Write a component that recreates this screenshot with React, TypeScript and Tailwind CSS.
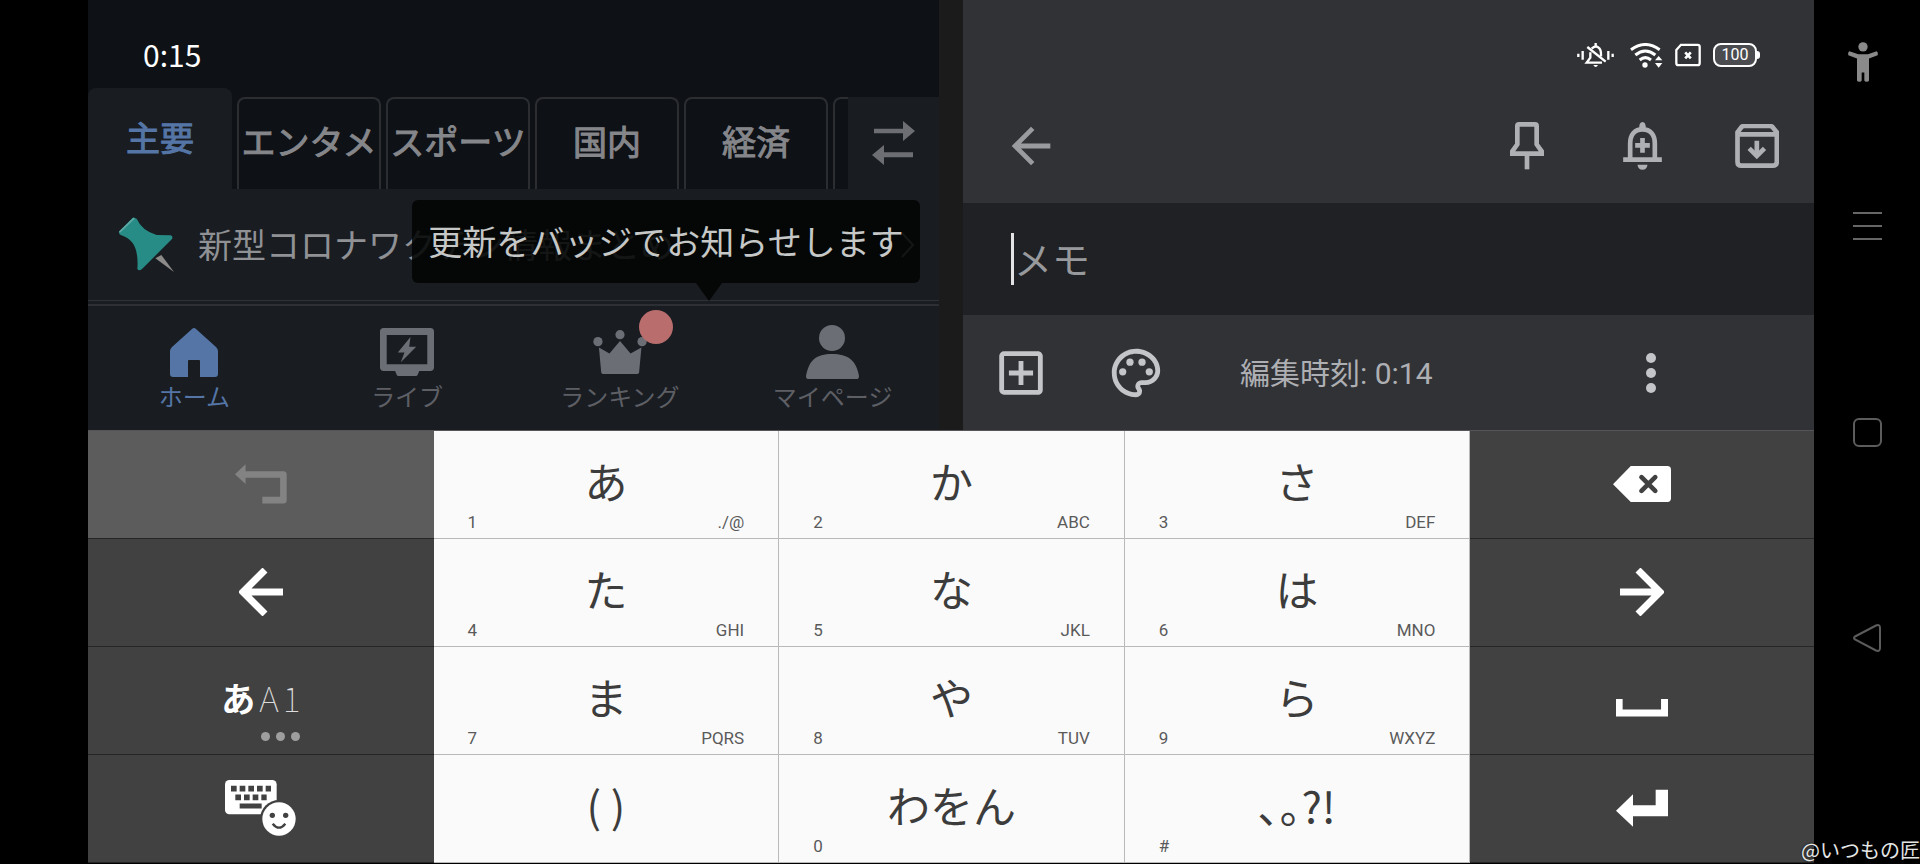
import type { ReactNode } from "react";
import { MdArrowBack, MdOutlineAddBox, MdOutlinePalette } from "react-icons/md";

const TABS = ["主要", "エンタメ", "スポーツ", "国内", "経済", ""];

const HomeIcon = () => (
  <svg width="48" height="49" viewBox="0 0 48 49" fill="currentColor">
    <path d="M22 1Q24 -1 26 1L46 19Q48 21 48 23V46Q48 49 45 49H30V33Q30 32 29 32H19Q18 32 18 33V49H3Q0 49 0 46V23Q0 21 2 19Z" />
  </svg>
);

const LiveIcon = () => (
  <svg width="54" height="48" viewBox="31 70 161 143" fill="currentColor">
    <path
      fillRule="evenodd"
      d="M42 70H181Q192 70 192 81V187Q192 198 181 198H148L143 210Q142 213 138 213H86Q82 213 81 210L76 198H42Q31 198 31 187V81Q31 70 42 70ZM51 91V178H172V91ZM122 97L118 126H139L93 172L104 143H84Z"
    />
  </svg>
);

const CrownIcon = () => (
  <svg width="54" height="44" viewBox="668 72 164 133" fill="currentColor">
    <circle cx="683" cy="107" r="14" />
    <circle cx="750" cy="86" r="14" />
    <circle cx="817" cy="107" r="14" />
    <path d="M686 125L718 143L750 105L782 143L815 125L808 201Q807 205 803 205H698Q694 205 693 201Z" />
  </svg>
);

const UserIcon = () => (
  <svg width="53" height="54" viewBox="0 0 53 54" fill="currentColor">
    <circle cx="26" cy="13" r="13" />
    <path d="M26 29C42 29 50 35 53 51Q53 54 51 54H2Q0 54 0 51C3 35 10 29 26 29Z" />
  </svg>
);

const NewsPinIcon = () => (
  <svg width="55" height="55" viewBox="117 650 165 165">
    <path d="M226 774L244 764L282 815Z" fill="#8d8a8a" />
    <path
      d="M163 652L170 655Q185 690 230 704L272 705Q280 708 276 716L186 806Q178 814 172 806Q176 755 158 728Q146 712 122 704Q114 699 119 692L155 655Q159 651 163 652Z"
      fill="#278b86"
    />
    <path d="M120 694L161 655" stroke="#5fa9a6" strokeWidth="5" strokeLinecap="round" />
  </svg>
);

const SwapIcon = () => (
  <svg width="43" height="44" viewBox="1116 122 129 132" fill="currentColor">
    <path d="M1122 145H1209V122L1245 152L1209 182V159H1122Z" />
    <path d="M1239 216H1152V194L1116 224L1152 254V231H1239Z" />
  </svg>
);

const MutedIcon = () => (
  <svg width="37" height="25" viewBox="291 68 111 75" fill="none" stroke="currentColor" strokeWidth="7">
    <path d="M295 100V110M308 92V118M385 92V118M398 100V110M347 68V78" />
    <path d="M335 85Q347 73 358 84Q364 91 363 108M331 96V112L320 127H366" />
    <path d="M322 80L377 124" />
    <path d="M340 134Q347 146 354 134Z" fill="currentColor" stroke="none" />
  </svg>
);

const WifiIcon = () => (
  <svg width="33" height="25" viewBox="449 68 99 75" fill="none" stroke="currentColor" strokeWidth="9">
    <path d="M452 88Q495 57 538 88M465 104Q495 80 525 104M478 119Q495 105 512 119" />
    <g fill="currentColor" stroke="none">
      <circle cx="494" cy="134" r="8" />
      <path d="M535 107L546 120H524ZM524 128H546L535 142Z" />
    </g>
  </svg>
);

const SimIcon = () => (
  <svg width="26" height="24" viewBox="580 70 79 70" fill="none" stroke="currentColor" strokeWidth="7">
    <path d="M584 90L598 74H649Q655 74 655 80V130Q655 136 649 136H590Q584 136 584 130Z" />
    <path d="M611 97L628 115M628 97L611 115" strokeWidth="8" />
  </svg>
);

const PinIcon = () => (
  <svg width="34" height="48" viewBox="88 303 102 144" fill="none" stroke="currentColor" strokeWidth="14">
    <path d="M115 310H163Q168 310 168 315V370L183 391V398H95V391L110 370V315Q110 310 115 310Z" />
    <path d="M139 398V445" />
  </svg>
);

const ReminderIcon = () => (
  <svg width="39" height="48" viewBox="427 307 116 144" fill="none" stroke="currentColor" strokeWidth="14">
    <path d="M448 418V372C448 344 462 329 485 329C508 329 522 344 522 372V418" />
    <path d="M427 420H543M463 377H507M485 355V399" />
    <g fill="currentColor" stroke="none">
      <path d="M475 326Q475 307 485 307Q495 307 495 326Z" />
      <path d="M470 435H500Q498 450 485 450Q472 450 470 435Z" />
    </g>
  </svg>
);

const ArchiveIcon = () => (
  <svg width="44" height="44" viewBox="765 311 131 132" fill="none" stroke="currentColor" strokeWidth="14">
    <path d="M772 336V424Q772 436 784 436H878Q890 436 890 424V336L877 320Q874 317 869 317H792Q787 317 784 320Z" />
    <path d="M772 342H890M830 361V404" />
    <path d="M807 384L830 407L853 384" />
  </svg>
);

const MoreIcon = () => (
  <svg width="10" height="40" viewBox="0 0 10 40" fill="currentColor">
    <circle cx="5" cy="5" r="5" />
    <circle cx="5" cy="20" r="5" />
    <circle cx="5" cy="35" r="5" />
  </svg>
);

const UndoIcon = () => (
  <svg width="52" height="40" viewBox="458 103 158 120">
    <path d="M458 133L490 103V163Z" fill="#838383" />
    <path d="M485 134H605V212H541" fill="none" stroke="#838383" strokeWidth="20" strokeLinejoin="round" />
  </svg>
);

const ArrowIcon = ({ right = false }: { right?: boolean }) => (
  <svg width="44" height="48" viewBox="0 0 44 48" fill="none" stroke="currentColor" strokeWidth="7">
    <path d={right ? "M0 24H40M18 2L40 24L18 46" : "M44 24H4M26 2L4 24L26 46"} />
  </svg>
);

const EmojiKeyboardIcon = () => (
  <svg width="71" height="56" viewBox="438 1051 213 168">
    <rect x="438" y="1051" width="155" height="103" rx="13" fill="#fff" />
    <path
      d="M456 1077H576M469 1103H563"
      stroke="#414141"
      strokeWidth="17"
      strokeDasharray="17 9"
    />
    <path d="M482 1129H548" stroke="#414141" strokeWidth="15" />
    <circle cx="600" cy="1168" r="57" fill="#414141" />
    <circle cx="600" cy="1168" r="50" fill="#fff" />
    <circle cx="580" cy="1157" r="8" fill="#414141" />
    <circle cx="620" cy="1157" r="8" fill="#414141" />
    <path d="M581 1182Q600 1206 619 1182" fill="none" stroke="#414141" strokeWidth="7" />
  </svg>
);

const BackspaceIcon = () => (
  <svg width="58" height="36" viewBox="44 78 173 107">
    <path d="M44 132L97 78H206Q217 78 217 89V174Q217 185 206 185H97Z" fill="#fff" />
    <path d="M129 111L170 152M170 111L129 152" stroke="#414141" strokeWidth="14" strokeLinecap="round" />
  </svg>
);

const SpaceIcon = () => (
  <svg width="52" height="34" viewBox="52 733 157 100" fill="currentColor">
    <path d="M52 780H72V812H188V780H209V833H52Z" />
  </svg>
);

const EnterIcon = () => (
  <svg width="52" height="38" viewBox="52 1056 156 112" fill="currentColor">
    <path d="M52 1120L103 1071V1104H171V1057H208V1137H103V1168Z" />
  </svg>
);

const AccessibilityIcon = () => (
  <svg width="30" height="40" viewBox="1106 65 90 119" fill="#8a8a8a">
    <circle cx="1151" cy="79" r="14" />
    <path d="M1110 92L1137 101H1166L1192 92Q1197 96 1195 104L1169 114V180Q1168 184 1162 184Q1156 184 1155 180V156H1147V180Q1146 184 1140 184Q1134 184 1133 180V114L1107 104Q1105 96 1110 92Z" />
  </svg>
);

const NAV = [
  { label: "ホーム", icon: <HomeIcon />, active: true, badge: false },
  { label: "ライブ", icon: <LiveIcon />, active: false, badge: false },
  { label: "ランキング", icon: <CrownIcon />, active: false, badge: true },
  { label: "マイページ", icon: <UserIcon />, active: false, badge: false },
];

const NewsApp = () => (
  <section className="flex-1 min-w-0 flex flex-col bg-[#0e1116]">
    <div className="h-22 pt-5 pl-[55px] flex items-center text-white text-[30px] leading-8">
      0:15
    </div>

    <div className="h-[101px] flex items-end">
      <div className="flex-1 min-w-0 h-full flex items-end gap-[5px] overflow-hidden">
        {TABS.map((tab, i) => (
          <button
            key={i}
            aria-label={tab || "次のタブ"}
            className={
              i === 0
                ? "w-36 h-full pb-1 shrink-0 rounded-t-lg bg-[#191c21] text-[#5475a5] text-[34px] whitespace-nowrap [-webkit-text-stroke:1px]"
                : "w-36 h-[92px] pb-2 shrink-0 rounded-t-lg border-2 border-b-0 border-[#2b2d31] text-[#85868a] text-[34px] whitespace-nowrap flex items-center justify-center [-webkit-text-stroke:1px]"
            }
          >
            {tab}
          </button>
        ))}
      </div>
      <button
        aria-label="タブの並べ替え"
        className="w-[91px] h-[92px] shrink-0 bg-[#191c21] text-[#6c6e74] flex items-center justify-center"
      >
        <SwapIcon />
      </button>
    </div>

    <div className="relative h-28 pl-[31px] pr-6 flex items-center gap-6 bg-[#191c21] border-b border-[#303236]">
      <NewsPinIcon />
      <a href="#news" className="flex-1 pb-0.5 text-[34px] text-[#8f9194] whitespace-nowrap">
        新型コロナワクチン情報まとめ
      </a>
      <svg width="14" height="26" viewBox="0 0 14 26" fill="none" stroke="#8f9194" strokeWidth="2">
        <path d="M1 1L12 13L1 25" />
      </svg>

      <div
        role="tooltip"
        className="absolute z-10 top-[11px] right-[19px] w-[508px] h-[83px] pb-0.5 rounded-md bg-[#020403]/88 text-[#c6c8c7] text-[34px] whitespace-nowrap flex items-center justify-center"
      >
        更新をバッジでお知らせします
        <svg
          width="26"
          height="18"
          viewBox="0 0 26 18"
          className="absolute top-full right-[198px]"
        >
          <path d="M0 0H26L13 18Z" fill="#050706" />
        </svg>
      </div>
    </div>

    <nav className="flex-1 pt-[3px] bg-[#191c21]">
      <div className="h-full pt-5 grid grid-cols-4 border-t-2 border-[#2d2f34]">
        {NAV.map((item) => (
          <a
            key={item.label}
            href="#tab"
            className={
              item.active
                ? "flex flex-col items-center gap-0.5 text-[#5475a5]"
                : "flex flex-col items-center gap-0.5 text-[#6c6e76]"
            }
          >
            <span className="relative h-[52px] flex items-center">
              {item.icon}
              {item.badge && (
                <span className="absolute -top-4 -right-[26px] size-[34px] rounded-full bg-[#b96d6c]" />
              )}
            </span>
            <span
              className={
                item.active
                  ? "text-2xl leading-8"
                  : "text-2xl leading-8 text-[#5d5f65]"
              }
            >
              {item.label}
            </span>
          </a>
        ))}
      </div>
    </nav>
  </section>
);

const IconButton = ({ label, children }: { label: string; children: ReactNode }) => (
  <button aria-label={label} className="size-[58px] shrink-0 flex items-center justify-center">
    {children}
  </button>
);

const MemoApp = () => (
  <section className="flex-1 min-w-0 flex flex-col bg-[#313236]">
    <div className="h-22 pt-[22px] pr-[54px] flex items-center justify-end gap-3 text-white">
      <span className="mr-1">
        <MutedIcon />
      </span>
      <WifiIcon />
      <SimIcon />
      <span className="flex items-center">
        <span className="w-11 h-6 rounded-lg border-2 border-white bg-[#4b4c50] text-base flex items-center justify-center font-[Roboto]">
          100
        </span>
        <span className="w-[3px] h-2 rounded-r-sm bg-white" />
      </span>
    </div>

    <div className="h-[115px] pl-[39px] pr-7 flex items-center gap-[57px] text-[#aeb0b4]">
      <IconButton label="戻る">
        <MdArrowBack size={58} color="#999b9f" />
      </IconButton>
      <span className="flex-1" />
      <IconButton label="固定">
        <PinIcon />
      </IconButton>
      <IconButton label="リマインダー">
        <ReminderIcon />
      </IconButton>
      <IconButton label="アーカイブ">
        <ArchiveIcon />
      </IconButton>
    </div>

    <div className="h-28 pl-12 flex items-center bg-[#202124]">
      <span className="w-[3px] h-[52px] bg-[#e3e3e5]" />
      <input
        type="text"
        aria-label="メモ"
        placeholder="メモ"
        className="flex-1 min-w-0 h-full pb-1 bg-transparent outline-none text-[38px] text-white placeholder:text-[#97999c]"
      />
    </div>

    <div className="flex-1 pl-[29px] pr-[134px] flex items-center text-[#c4c5c9]">
      <IconButton label="追加">
        <MdOutlineAddBox size={58} />
      </IconButton>
      <span className="w-[57px]" />
      <IconButton label="カラー">
        <MdOutlinePalette size={58} />
      </IconButton>
      <p className="flex-1 pl-[75px] pt-0.5 text-[30px] text-[#aeafb3] font-[Roboto,'Noto_Sans_CJK_JP',sans-serif]">
        編集時刻: 0:14
      </p>
      <IconButton label="その他">
        <MoreIcon />
      </IconButton>
    </div>
  </section>
);

const DarkKey = ({
  label,
  disabled = false,
  children,
}: {
  label: string;
  disabled?: boolean;
  children: ReactNode;
}) => (
  <button
    aria-label={label}
    disabled={disabled}
    className="h-27 pb-0.5 flex flex-col items-center justify-center bg-[#414141] disabled:bg-[#5c5c5c] border-b border-[#252525] text-white"
  >
    {children}
  </button>
);

const KanaKey = ({ kana, num = "", latin = "" }: { kana: string; num?: string; latin?: string }) => (
  <button className="h-27 pt-5 pb-1.5 flex flex-col justify-between bg-[#fafafa] border-b border-r border-[#b9b9b9] text-[#3c3c3c]">
    <span className="w-full text-[43px] leading-[58px]">{kana}</span>
    <span className="w-full h-5 px-[34px] flex justify-between text-[17px] leading-5 text-[#5a5a5a] font-[Roboto]">
      <span>{num}</span>
      <span>{latin}</span>
    </span>
  </button>
);

const Keyboard = () => (
  <section
    aria-label="キーボード"
    className="grid grid-cols-[repeat(4,346fr)_344fr] border-t border-[#555459]"
  >
    <DarkKey label="元に戻す" disabled>
      <UndoIcon />
    </DarkKey>
    <KanaKey kana="あ" num="1" latin="./@" />
    <KanaKey kana="か" num="2" latin="ABC" />
    <KanaKey kana="さ" num="3" latin="DEF" />
    <DarkKey label="削除">
      <BackspaceIcon />
    </DarkKey>

    <DarkKey label="左へ">
      <ArrowIcon />
    </DarkKey>
    <KanaKey kana="た" num="4" latin="GHI" />
    <KanaKey kana="な" num="5" latin="JKL" />
    <KanaKey kana="は" num="6" latin="MNO" />
    <DarkKey label="右へ">
      <ArrowIcon right />
    </DarkKey>

    <DarkKey label="文字種の切り替え">
      <span className="pt-5 flex items-baseline gap-1 text-[34px] leading-10">
        <b>あ</b>
        <span className="flex gap-1 font-thin text-[#dcdcdc]">
          <span>A</span>
          <span>1</span>
        </span>
      </span>
      <span className="pl-10 pt-3.5 flex gap-1.5">
        <span className="size-[9px] rounded-full bg-[#9e9e9e]" />
        <span className="size-[9px] rounded-full bg-[#9e9e9e]" />
        <span className="size-[9px] rounded-full bg-[#9e9e9e]" />
      </span>
    </DarkKey>
    <KanaKey kana="ま" num="7" latin="PQRS" />
    <KanaKey kana="や" num="8" latin="TUV" />
    <KanaKey kana="ら" num="9" latin="WXYZ" />
    <DarkKey label="空白">
      <SpaceIcon />
    </DarkKey>

    <DarkKey label="絵文字">
      <EmojiKeyboardIcon />
    </DarkKey>
    <KanaKey kana="( )" />
    <KanaKey kana="わをん" num="0" />
    <KanaKey kana="､｡?!" num="#" />
    <DarkKey label="改行">
      <EnterIcon />
    </DarkKey>
  </section>
);

const SystemRail = () => (
  <aside className="w-[106px] shrink-0 flex flex-col">
    <button aria-label="ユーザー補助" className="h-[123px] pr-2 flex items-center justify-center">
      <AccessibilityIcon />
    </button>
    <button aria-label="メニュー" className="h-[206px] flex flex-col items-center justify-center gap-[11px]">
      <span className="w-[29px] h-0.5 bg-[#666666]" />
      <span className="w-[29px] h-0.5 bg-[#666666]" />
      <span className="w-[29px] h-0.5 bg-[#666666]" />
    </button>
    <button aria-label="ホーム" className="h-[206px] flex items-center justify-center">
      <span className="size-[29px] rounded-md border-2 border-[#5c5c5c]" />
    </button>
    <button aria-label="戻る" className="h-[206px] flex items-center justify-center">
      <svg width="28" height="28" viewBox="0 0 28 28" fill="none" stroke="#5c5c5c" strokeWidth="2">
        <path d="M2 12.500L23 1.500Q27 0 27 4V24Q27 28 23 26.500L2 15.500Q0 14 2 12.500Z" />
      </svg>
    </button>
  </aside>
);

export default function App() {
  return (
    <div className="relative min-h-screen flex bg-black pl-22 font-['Noto_Sans_CJK_JP',sans-serif]">
      <main className="flex-1 min-w-0">
        <div className="h-[430px] flex">
          <NewsApp />
          <div className="w-6 shrink-0 bg-[#1b1b1b]" />
          <MemoApp />
        </div>
        <Keyboard />
      </main>
      <SystemRail />
      <p className="absolute right-0 bottom-0 text-xl leading-7 text-[#e6e6e6] text-shadow-[0_0_2px_#000]">
        @いつもの匠
      </p>
    </div>
  );
}
